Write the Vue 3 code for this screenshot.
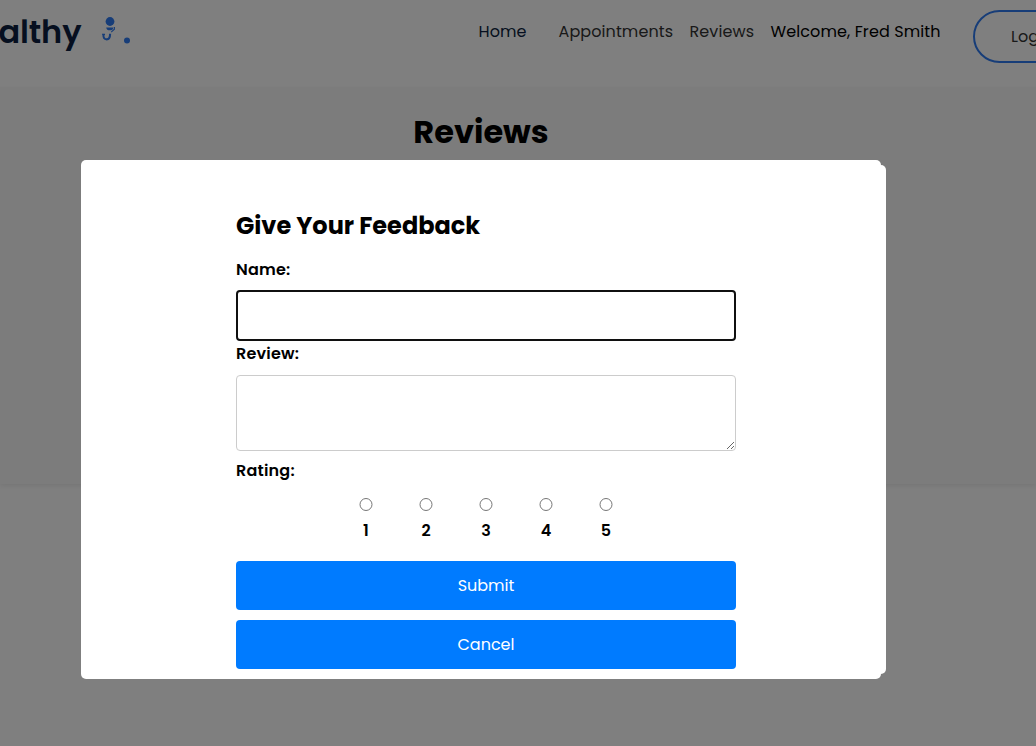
<script setup>
const ratings = [1, 2, 3, 4, 5]
</script>

<template>
  <div class="page">
    <header class="navbar">
      <div class="brand">
        <span class="brand-name">StayHealthy</span>
        <svg class="brand-icon" width="32" height="32" viewBox="0 0 32 32">
          <g fill="#2f7bf0">
            <circle cx="11" cy="6.5" r="4.4" />
            <path d="M7.2 12.4h7.3q-.5 2.9-3.7 2.9t-3.6-2.9z" />
            <circle cx="28" cy="25.6" r="3" />
          </g>
          <path d="M4.6 19c-.8 3.6.8 5.4 3.1 5.4s3.4-1.8 3.4-5.6" fill="none" stroke="#2f7bf0" stroke-width="2.1" />
          <path d="M3.2 19.4h2.8M15.4 12v2.2l-3.2 3" fill="none" stroke="#2f7bf0" stroke-width="1.1" />
        </svg>
      </div>
      <nav class="links">
        <a class="home">Home</a>
        <a class="appointments">Appointments</a>
        <a class="reviews">Reviews</a>
        <span class="welcome">Welcome, Fred Smith</span>
      </nav>
      <button class="logout">Logout</button>
    </header>
    <main class="reviews-section">
      <h1><span>Reviews</span></h1>
    </main>
    <div class="overlay">
      <div class="modal">
        <form class="feedback" @submit.prevent>
          <h2><span>Give Your Feedback</span></h2>
          <label class="name-label">Name:</label>
          <input class="name-input" type="text" />
          <label class="review-label">Review:</label>
          <textarea></textarea>
          <label class="rating-label">Rating:</label>
          <div class="ratings">
            <label v-for="n in ratings" :key="n" class="rating">
              <input type="radio" name="rating" :value="n" />
              <span>{{ n }}</span>
            </label>
          </div>
          <button class="action submit">Submit</button>
          <button class="action cancel" type="button">Cancel</button>
        </form>
      </div>
    </div>
  </div>
</template>

<style>
body { margin: 0; overflow: hidden; }
</style>

<style scoped>
.page {
  position: relative;
  height: 746px;
  overflow: hidden;
  background: #fff;
  color: #000;
  font-family: Poppins, Inter, "Open Sans", sans-serif;
  font-size: 16px;
}
.page * { box-sizing: border-box; }
.navbar {
  display: flex;
  align-items: flex-start;
  height: 87px;
  overflow: hidden;
}
.brand {
  display: flex;
  flex: none;
  justify-content: flex-end;
  width: 131px;
  padding-top: 15px;
}
.brand-name {
  margin-right: 17.6px;
  color: #0c1f40;
  font-size: 32px;
  font-weight: 600;
  line-height: 34px;
  letter-spacing: -0.1px;
}
.brand-icon { flex: none; }
.links {
  display: flex;
  flex: none;
  margin-left: 347.5px;
  line-height: 24px;
  padding-top: 20px;
  white-space: nowrap;
}
.home { width: 80px; color: #0c1f40; letter-spacing: 0.1px; }
.appointments { width: 131px; color: #333; letter-spacing: 0.1px; }
.reviews { width: 81px; color: #333; letter-spacing: 0.1px; }
.welcome { width: 202.5px; letter-spacing: 0.1px; }
.logout {
  flex: none;
  width: 130px;
  height: 53px;
  margin-top: 10px;
  padding: 0 0 0 36px;
  border: 2px solid #2f7bf0;
  border-radius: 27px;
  background: transparent;
  color: #333;
  font: inherit;
  text-align: left;
}
.reviews-section {
  height: 397px;
  background: #f8f8f8;
  box-shadow: 0 2px 5px rgba(0, 0, 0, 0.08);
}
h1 {
  width: 962px;
  margin: 0;
  padding-top: 21px;
  font-size: 32px;
  font-weight: 700;
  line-height: 48px;
  text-align: center;
}
.overlay {
  position: absolute;
  inset: 0;
  padding: 160px 0 0 81px;
  background: rgba(0, 0, 0, 0.5);
}
.modal {
  position: relative;
  width: 800px;
  height: 519px;
  padding: 48px 0 0 155px;
  border-radius: 5px;
  background: #fff;
}
.modal::after {
  content: "";
  position: absolute;
  top: 5px;
  right: -5px;
  bottom: 5px;
  width: 20px;
  border-radius: 5px;
  background: #fff;
}
.feedback {
  display: flex;
  flex-direction: column;
  width: 500px;
}
h2 {
  margin: 0;
  font-size: 24px;
  font-weight: 700;
  line-height: 36px;
}
.feedback > label {
  height: 24px;
  font-weight: 600;
  line-height: 24px;
  letter-spacing: 0.2px;
}
.name-label { margin-top: 14px; }
.name-input {
  height: 51px;
  margin: 8px 0 1px;
  padding: 10px;
  border: 2px solid #101010;
  border-radius: 4px;
  outline: none;
}
textarea {
  height: 76px;
  margin: 9px 0 8px;
  border: 1px solid #ccc;
  border-radius: 4px;
  resize: vertical;
}
.ratings {
  display: flex;
  justify-content: center;
  margin-top: 15px;
}
.rating {
  display: flex;
  flex-direction: column;
  align-items: center;
  width: 60px;
  font-weight: 600;
  line-height: 24px;
}
.rating input {
  width: 14px;
  height: 13px;
  margin: 0 0 8px;
}
.action {
  height: 49px;
  padding: 0;
  border: 0;
  border-radius: 4px;
  background: #007bff;
  color: #fff;
  font: inherit;
}
.submit { margin-top: 18px; }
.cancel { margin-top: 10px; }
</style>
